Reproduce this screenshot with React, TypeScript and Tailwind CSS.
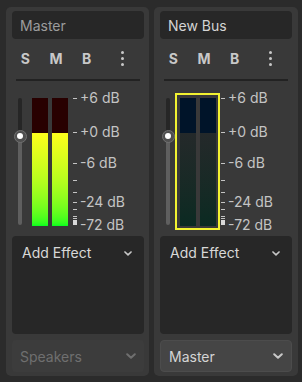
const TICKS = [0, 34, 65, 82, 94, 104, 111, 118];
const LABELS = [
  { at: 0, text: "+6 dB" },
  { at: 34, text: "+0 dB" },
  { at: 65, text: "-6 dB" },
  { at: 104, text: "-24 dB" },
  { at: 127, text: "-72 dB" },
];

const STRIPS = [
  { name: "Master", nameDim: true, selected: false, out: "Speakers", outDisabled: true, width: "w-[143px]", pr: "pr-[5px]" },
  { name: "New Bus", nameDim: false, selected: true, out: "Master", outDisabled: false, width: "w-[144px]", pr: "pr-[6px]" },
];

function Chevron({ size, color }: { size: number; color: string }) {
  return (
    <svg width={size} height={size * 0.6} viewBox="0 0 10 6" fill="none">
      <path d="M1.2 1.2L5 4.8L8.8 1.2" stroke={color} strokeWidth="2" strokeLinecap="round" strokeLinejoin="round" />
    </svg>
  );
}

function Slider() {
  return (
    <div className="relative ml-[6px] mt-[5px] w-[4px] h-[127px] shrink-0 flex flex-col">
      <div className="h-[38px] rounded-t-full bg-[#262626]" />
      <div className="flex-1 rounded-b-full bg-[#5f5f5f]" />
      <div className="absolute left-[-4.5px] top-[31.5px] w-[13px] h-[13px] rounded-full bg-[#4f4f4f] border border-[#707070] flex items-center justify-center">
        <div className="w-[6px] h-[6px] rounded-full bg-white" />
      </div>
    </div>
  );
}

function Meter({ selected }: { selected: boolean }) {
  const top = selected ? "bg-[#001429]" : "bg-[#280000]";
  const fill = selected
    ? "bg-gradient-to-b from-[#24292a] to-[#0a2a22]"
    : "bg-gradient-to-b from-[#ffff1c] via-[#b8ff1e] to-[#00ff1e]";
  return (
    <div
      className={`ml-[5px] shrink-0 border-2 pl-[3px] pr-[2px] pt-[3px] pb-[2px] flex gap-[4px] ${
        selected ? "border-[#f2f231]" : "border-transparent"
      }`}
    >
      {[0, 1].map((i) => (
        <div key={i} className="w-[16px] h-[128px] flex flex-col">
          <div className={`h-[35px] ${top}`} />
          <div className={`flex-1 ${fill}`} />
        </div>
      ))}
    </div>
  );
}

function Scale() {
  return (
    <div className="relative ml-[1px] mt-[5px] w-[60px] h-[128px] shrink-0 text-[14px] leading-[20px] text-[#c4c4c4]">
      {TICKS.map((t) => (
        <div key={t} className="absolute left-0 w-[4px] h-[1px] bg-[#c4c4c4]" style={{ top: t }} />
      ))}
      <div className="absolute left-0 top-[120px] w-[4px] h-[1px] bg-[#c4c4c4]" />
      <div className="absolute left-0 top-[122px] w-[4px] h-[5px] bg-[#d8d8d8]" />
      {LABELS.map((l) => (
        <span key={l.text} className="absolute left-[7px] whitespace-nowrap" style={{ top: l.at - 10 }}>
          {l.text}
        </span>
      ))}
    </div>
  );
}

function Strip({ s }: { s: (typeof STRIPS)[number] }) {
  return (
    <div className={`${s.width} h-[369px] rounded-[5px] bg-[#393939] pl-[6px] ${s.pr} pt-[4px] pb-[4px] flex flex-col`}>
      <div
        className={`h-[28px] rounded-[4px] bg-[#272727] pl-[8px] flex items-center text-[14px] ${
          s.nameDim ? "text-[#9c9c9c]" : "text-[#d4d4d4]"
        }`}
      >
        {s.name}
      </div>

      <div className="h-[38px] -ml-[2px] flex items-center text-[14px] font-bold text-[#c8c8c8]">
        <span className="w-[32px] text-center">S</span>
        <span className="w-[32px] text-center">M</span>
        <span className="w-[32px] text-center">B</span>
        <span className="w-[44px] flex flex-col items-center gap-[3px]">
          <span className="w-[3px] h-[3px] rounded-full bg-[#c8c8c8]" />
          <span className="w-[3px] h-[3px] rounded-full bg-[#c8c8c8]" />
          <span className="w-[3px] h-[3px] rounded-full bg-[#c8c8c8]" />
        </span>
      </div>

      <div className="mt-[2px] mx-[4px] h-[2px] bg-[#222222]" />

      <div className="mt-[12px] flex items-start">
        <Slider />
        <Meter selected={s.selected} />
        <Scale />
      </div>

      <div className="mt-[6px] h-[98px] rounded-[4px] bg-[#272727] pl-[10px] pr-[12px] pt-[7px] flex items-start justify-between">
        <span className="text-[14px] leading-[20px] text-[#d8d8d8]">Add Effect</span>
        <span className="mt-[8px]">
          <Chevron size={8} color="#c8c8c8" />
        </span>
      </div>

      <div
        className={`mt-[6px] h-[32px] rounded-[4px] pl-[8px] pr-[8px] flex items-center justify-between text-[14px] ${
          s.outDisabled
            ? "bg-[#3c3c3c] text-[#6f6f6f]"
            : "bg-[#454545] border border-[#4c4c4c] text-[#d4d4d4]"
        }`}
      >
        <span>{s.out}</span>
        <Chevron size={10} color={s.outDisabled ? "#6f6f6f" : "#c8c8c8"} />
      </div>
    </div>
  );
}

export default function App() {
  return (
    <div
      className="w-[302px] h-[382px] bg-[#2b2b2b] pl-[6px] pt-[7px] flex gap-[5px] items-start"
      style={{ fontFamily: "Inter, 'Noto Sans', sans-serif" }}
    >
      {STRIPS.map((s) => (
        <Strip key={s.name} s={s} />
      ))}
    </div>
  );
}
